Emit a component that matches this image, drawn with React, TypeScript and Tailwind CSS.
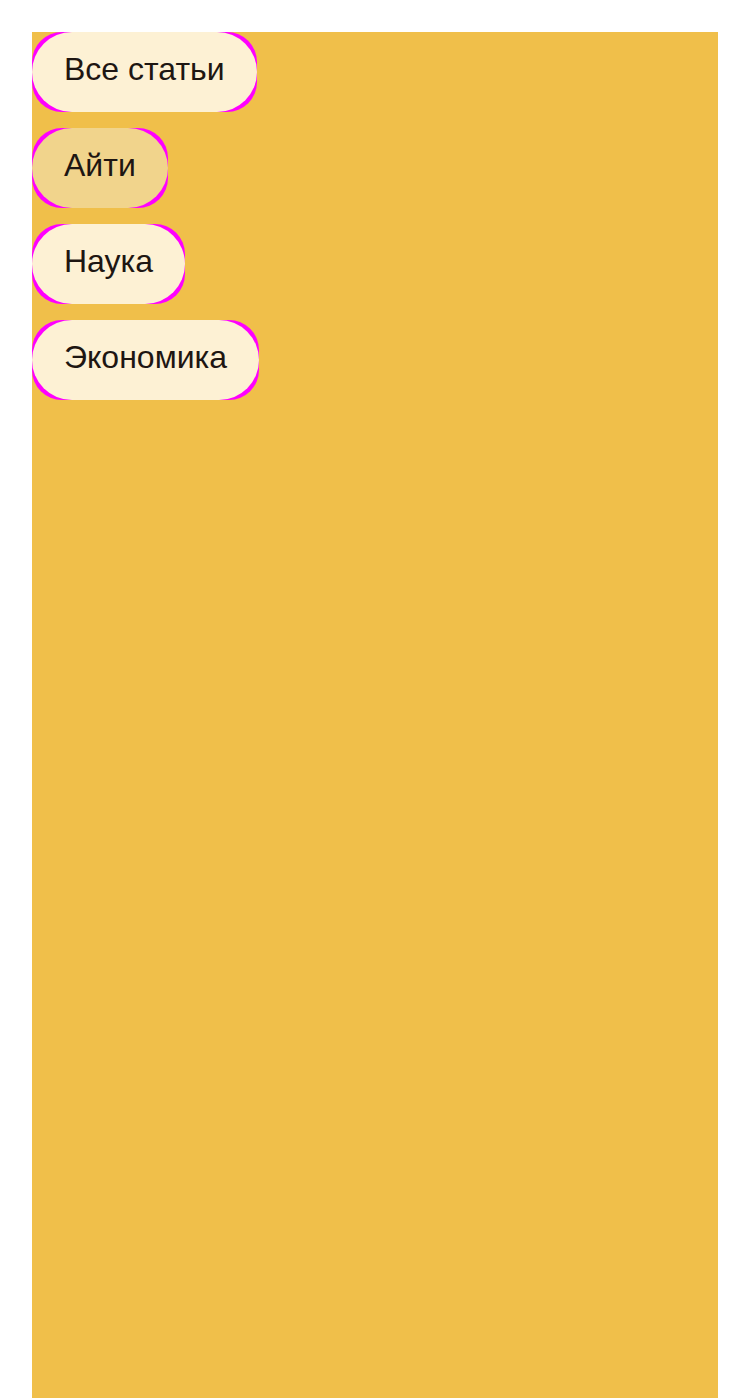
const categories = [
  { label: 'Все статьи', active: false },
  { label: 'Айти', active: true },
  { label: 'Наука', active: false },
  { label: 'Экономика', active: false },
];

export default function App() {
  return (
    <div className="bg-white px-8 pt-8" style={{ fontFamily: '"Liberation Sans", Arial, sans-serif' }}>
      <div className="bg-[#f0bf4a] h-[1366px]">
        <nav className="flex flex-col items-start gap-4">
          {categories.map(cat => (
            <div key={cat.label} className="bg-[#ff00ff] rounded-[30px]">
              <button
                className={`flex items-center rounded-full px-8 pb-[6px] h-20 text-[32px] leading-none text-[#1e1612] ${
                  cat.active ? 'bg-[#f1d48c]' : 'bg-[#fdf1d4]'
                }`}
              >
                {cat.label}
              </button>
            </div>
          ))}
        </nav>
      </div>
    </div>
  );
}
